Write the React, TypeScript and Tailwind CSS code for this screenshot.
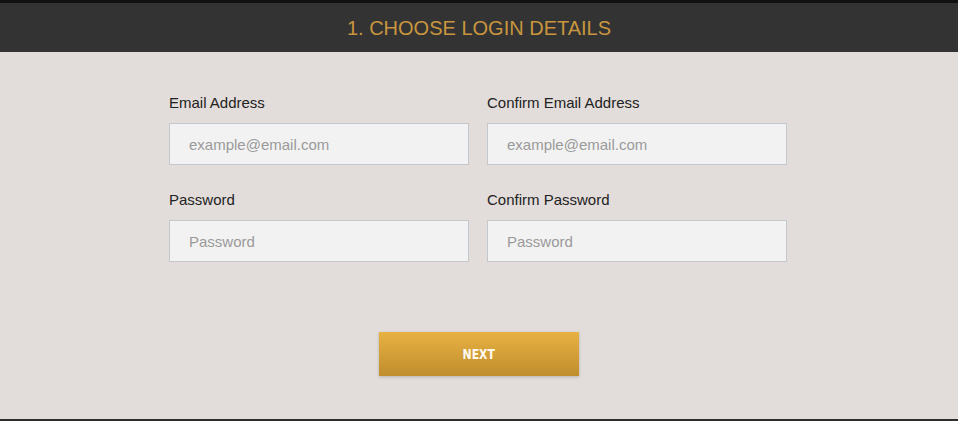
import React from 'react';

const fields = [
  { label: 'Email Address', placeholder: 'example@email.com', type: 'email' },
  { label: 'Confirm Email Address', placeholder: 'example@email.com', type: 'email' },
  { label: 'Password', placeholder: 'Password', type: 'password' },
  { label: 'Confirm Password', placeholder: 'Password', type: 'password' },
];

export default function App() {
  return (
    <div className="min-h-screen flex flex-col bg-[#e2dddb] font-['Liberation_Sans',Arial,sans-serif]">
      <div className="h-[3px] bg-[#111111]" />
      <header className="h-[49px] bg-[#333333] flex items-center justify-center">
        <h1 className="text-[20px] leading-none text-[#c9963f]">1. CHOOSE LOGIN DETAILS</h1>
      </header>

      <main className="flex-1 border-b-2 border-[#2e2e2e]">
        <form className="w-[620px] mx-auto pr-[2px] pt-[42px]" onSubmit={(e) => e.preventDefault()}>
          <div className="grid grid-cols-2 gap-x-[18px] gap-y-[26px]">
            {fields.map((f) => (
              <label key={f.label} className="flex flex-col">
                <span className="text-[15px] leading-[17px] text-[#222222] mb-[12px]">{f.label}</span>
                <input
                  type={f.type}
                  placeholder={f.placeholder}
                  className="h-[42px] w-full bg-[#f2f2f2] border border-[#c4c7cb] pl-[19px] text-[15px] text-[#333] placeholder:text-[#9a9a9a] outline-none"
                />
              </label>
            ))}
          </div>

          <div className="flex justify-center mt-[70px] pl-[2px]">
            <button
              type="submit"
              className="w-[200px] h-[44px] bg-gradient-to-b from-[#e8b142] to-[#c08e2e] shadow-[0_1px_3px_rgba(0,0,0,0.2)] text-[#fffaf0] text-[14px] font-bold font-['DejaVu_Sans_Condensed',sans-serif]"
            >
              <span className="inline-block scale-x-[0.86]">NEXT</span>
            </button>
          </div>
        </form>
      </main>
    </div>
  );
}
